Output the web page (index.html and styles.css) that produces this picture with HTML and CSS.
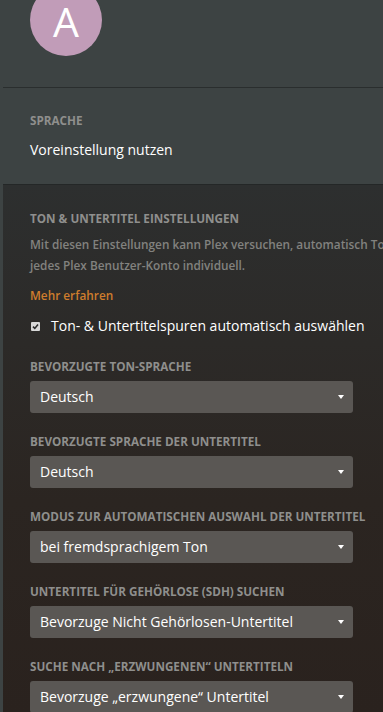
FILE: index.html
```html
<!DOCTYPE html>
<html lang="de">
<head>
<meta charset="utf-8">
<title>Konto - Sprache</title>
<link rel="stylesheet" href="styles.css">
<meta name="viewport" content="width=device-width, initial-scale=1.0">
</head>
<body>
<div class="page">
    <div class="profile">
        <div class="avatar">A</div>
    </div>
    <div class="divider"></div>
    <section class="language">
        <div class="label">Sprache</div>
        <div class="value">Voreinstellung nutzen</div>
    </section>
    <section class="panel">
        <div class="label">Ton &amp; Untertitel Einstellungen</div>
        <p class="desc">
            <span>Mit diesen Einstellungen kann Plex versuchen, automatisch Ton- und Untertitelspuren auszuwählen.</span>
            <span>jedes Plex Benutzer-Konto individuell.</span>
        </p>
        <a class="more" href="#">Mehr erfahren</a>
        <label class="check">
            <svg width="9" height="9" viewBox="0 0 9 9"><rect width="9" height="9" rx="1" fill="#d8d8d8"/><path d="M2 4.6 L3.8 6.4 L7 2.6" fill="none" stroke="#2a2a2a" stroke-width="1.6"/></svg>
            <span>Ton- &amp; Untertitelspuren automatisch auswählen</span>
        </label>

        <div class="field">
            <div class="label">Bevorzugte Ton-Sprache</div>
            <div class="select">Deutsch<i class="caret"></i></div>
        </div>
        <div class="field">
            <div class="label">Bevorzugte Sprache der Untertitel</div>
            <div class="select">Deutsch<i class="caret"></i></div>
        </div>
        <div class="field">
            <div class="label">Modus zur automatischen Auswahl der Untertitel</div>
            <div class="select">bei fremdsprachigem Ton<i class="caret"></i></div>
        </div>
        <div class="field">
            <div class="label">Untertitel für Gehörlose (SDH) suchen</div>
            <div class="select">Bevorzuge Nicht Gehörlosen-Untertitel<i class="caret"></i></div>
        </div>
        <div class="field">
            <div class="label">Suche nach „erzwungenen“ Untertiteln</div>
            <div class="select">Bevorzuge „erzwungene“ Untertitel<i class="caret"></i></div>
        </div>
    </section>
</div>
</body>
</html>
```

FILE: styles.css
```css
* {
    margin: 0;
    padding: 0;
    box-sizing: border-box;
    font-family: 'Open Sans', sans-serif;
}

body {
    background: #3d4343;
    overflow: hidden;
}

.page {
    min-height: 100vh;
}

.profile {
    height: 87px;
    overflow: hidden;
}

.avatar {
    width: 72px;
    height: 72px;
    margin: -16px 0 0 30px;
    padding-top: 16px;
    border-radius: 50%;
    background: #c19cb8;
    color: #fff;
    font-size: 41px;
    font-weight: 400;
    line-height: 42px;
    text-align: center;
}

.divider {
    margin-left: 3px;
    border-top: 1px solid #2a2e2e;
}

.label {
    font-size: 11.7px;
    font-weight: 700;
    line-height: 16px;
    text-transform: uppercase;
    color: #8f8f8d;
}

.language {
    padding: 24px 0 24px 30px;
}

.language .value {
    margin-top: 12px;
    font-size: 14px;
    line-height: 20px;
    color: #fff;
}

.panel {
    margin-left: 3px;
    padding: 25px 0 0 27px;
    min-height: 528px;
    border-top: 1px solid #242727;
    background: linear-gradient(to bottom, #2d2f2f, #2b2521 60%, #2a221e);
    overflow: hidden;
}

.desc {
    margin-top: 8px;
    font-size: 11.8px;
    font-weight: 600;
    line-height: 21px;
    color: #82827f;
}

.desc span {
    display: block;
    white-space: nowrap;
}

.more {
    display: block;
    margin-top: 10px;
    font-size: 11.8px;
    font-weight: 600;
    line-height: 18px;
    color: #cf7d2d;
    text-decoration: none;
}

.check {
    display: flex;
    align-items: center;
    gap: 11px;
    margin: 12px 0 0 1px;
    font-size: 14px;
    line-height: 20px;
    color: #fff;
}

.field {
    margin-top: 22px;
}

.field + .field {
    margin-top: 20px;
}

.select {
    position: relative;
    width: 323px;
    height: 32px;
    margin-top: 7px;
    padding: 0 10px;
    border-radius: 3px;
    background: #5a5754;
    font-size: 14px;
    font-weight: 500;
    line-height: 32px;
    color: #fff;
}

.caret {
    position: absolute;
    right: 9px;
    top: 14px;
    border-left: 3px solid transparent;
    border-right: 3px solid transparent;
    border-top: 4px solid #fff;
}
```
